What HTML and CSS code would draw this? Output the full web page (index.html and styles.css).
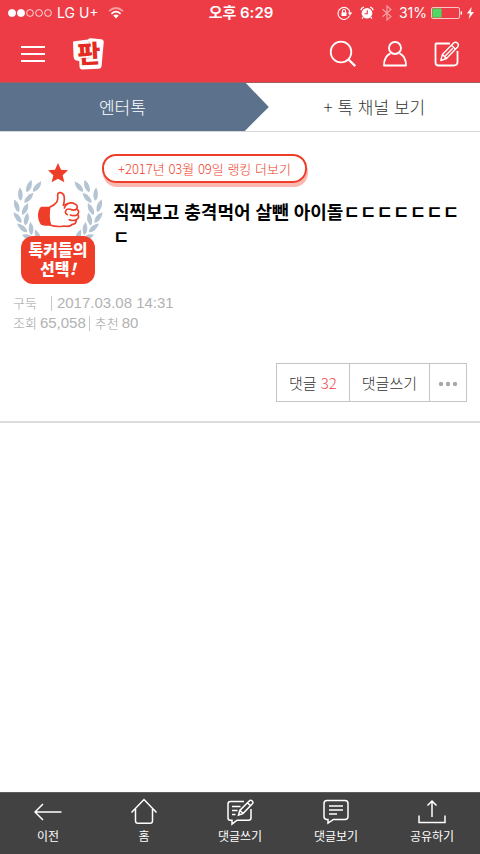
FILE: index.html
```
<!DOCTYPE html>
<html lang="ko">
	<head>
		<meta charset="UTF-8" />
		<meta name="viewport" content="width=device-width, initial-scale=1.0" />
		<title>판 - 엔터톡</title>
		<link rel="stylesheet" href="styles.css">
	</head>
	<body>
		<header class="top">
			<div class="status">
				<div class="status-left">
					<svg class="signal" width="44" height="10" viewBox="0 0 44 10" fill="none" stroke="#fff" stroke-width="0.8">
						<circle cx="4" cy="5" r="3.6" fill="#fff" />
						<circle cx="13" cy="5" r="3.6" fill="#fff" />
						<circle cx="22" cy="5" r="3.4" />
						<circle cx="31" cy="5" r="3.4" />
						<circle cx="40" cy="5" r="3.4" />
					</svg>
					<span>LG U+</span>
					<svg class="wifi" width="16" height="12" viewBox="0 0 16 12" fill="none" stroke="#fff" stroke-width="1.7">
						<path d="M1 4.2Q8-2.2 15 4.2" opacity="0.5" />
						<path d="M3.4 6.8Q8 2.6 12.6 6.8" />
						<path d="M5.2 8.6Q8 6.2 10.8 8.6L8 11.6Z" fill="#fff" stroke="none" />
					</svg>
				</div>
				<strong class="clock">오후 6:29</strong>
				<div class="status-right">
					<svg width="16" height="14" viewBox="0 0 16 14" fill="none" stroke="#fff" stroke-width="1.1">
						<path d="M12.6 9.6A6 6 0 1 1 13 7" />
						<path d="M10.8 6.6h4.6L13.1 9.6Z" fill="#fff" stroke="none" />
						<path d="M4.5 6.3h5v3.7h-5z" fill="#fff" stroke="none" />
						<path d="M5.5 6.5V5a1.5 1.5 0 0 1 3 0v1.5" />
					</svg>
					<svg class="alarm" width="14" height="14" viewBox="0 0 14 14">
						<circle cx="7" cy="7.3" r="5.3" fill="#fff" />
						<path d="M1 4.2Q1.3 1.6 4 1.2M13 4.2Q12.7 1.6 10 1.2M3.2 11.2l-1.2 1.5M10.8 11.2l1.2 1.5" fill="none" stroke="#fff" stroke-width="1.3" />
						<path d="M7.3 4.2v3.5H4.6" fill="none" stroke="#ee3c46" stroke-width="1.1" />
					</svg>
					<svg class="bluetooth" width="12" height="16" viewBox="0 0 12 16" fill="none" stroke="#fff" stroke-width="1.2">
						<path d="M1.5 4.2l8.5 7.3-4 3.5V1l4 3.5-8.5 7.3" />
					</svg>
					<span>31%</span>
					<svg width="32" height="12" viewBox="0 0 32 12">
						<rect x="0.5" y="0.5" width="28" height="11" rx="1.5" fill="none" stroke="#fff" stroke-opacity="0.7" />
						<rect x="1.5" y="1.5" width="9" height="9" fill="#4cd964" />
						<path d="M29.6 4q1.6 0 1.6 2t-1.6 2z" fill="#fff" />
					</svg>
					<svg class="bolt" width="7" height="12" viewBox="0 0 7 12"><path d="M4.6 0L0 6.6h2.8L1.7 12 7 5H4Z" fill="#fff" /></svg>
				</div>
			</div>
			<nav class="bar">
				<button class="icon-btn" type="button" aria-label="메뉴">
					<svg width="26" height="18" viewBox="0 0 26 18" stroke="#fff" stroke-width="1.8"><path d="M1 2h24M1 9h24M1 16h24" /></svg>
				</button>
				<a class="logo" href="#" aria-label="판">
					<svg width="34" height="34" viewBox="0 0 34 34">
						<path d="M2 4.5L17 2.6Q18 1 20 1.2L30 2.2Q33 2.6 32.7 5.5L31.6 17.5 30.6 29Q30.4 31.6 28 31.7L11 32.5Q8.6 32.4 8.5 30L8.2 24 4.5 23.2Q3 23 2.6 20Z" fill="#fff" />
						<path d="M18 4L19 19M9 22l10-1" stroke="#f3b5b3" stroke-width="0.8" fill="none" />
						<text class="logo-text" x="18" y="26" text-anchor="middle" transform="rotate(-3 17 17)">판</text>
					</svg>
				</a>
				<span class="spacer"></span>
				<button class="icon-btn" type="button" aria-label="검색">
					<svg width="28" height="28" viewBox="0 0 28 28" fill="none" stroke="#fff" stroke-width="1.8"><circle cx="12" cy="12" r="10.3" /><path d="M19.3 19.3l7 6.8" stroke-width="2.2" /></svg>
				</button>
				<button class="icon-btn" type="button" aria-label="내 정보">
					<svg width="28" height="28" viewBox="0 0 28 28" fill="none" stroke="#fff" stroke-width="1.8" stroke-linejoin="round"><circle cx="14" cy="8" r="6" /><path d="M9.5 13.3C5.5 15 3 18.5 3 25.5H25C25 18.5 22.5 15 18.5 13.3" /></svg>
				</button>
				<button class="icon-btn" type="button" aria-label="글쓰기">
					<svg width="28" height="28" viewBox="0 0 28 28" fill="none" stroke="#fff" stroke-width="1.8" stroke-linejoin="round">
						<path d="M17 3.5H3.2Q2.5 3.5 2.5 4.2V22.5Q2.5 25.5 5.5 25.5H20.5Q24.5 25.5 24.5 22V11" />
						<path d="M7.8 20.5l1.6-6.1L20.6 3Q22.5 1.3 24.4 3.1 26.3 5 24.6 7L13.5 18.5ZM18.5 5.2l4 4M9.4 14.4l4.1 4.1M12 16.3l7.8-8" stroke-width="1.4" />
					</svg>
				</button>
			</nav>
		</header>

		<nav class="tabs">
			<a class="tab current" href="#">엔터톡</a>
			<a class="tab" href="#">+ 톡 채널 보기</a>
		</nav>

		<main class="post">
			<div class="post-head">
				<div class="badge">
					<svg viewBox="0 0 270 237" width="90" height="79">
						<defs>
							<path id="leaf" d="M0-21Q9-8 7 4T0 19Q-7 14-7 2T0-21Z" />
							<g id="laurel" fill="#b4c4d3">
								<use href="#leaf" transform="translate(48 73) rotate(20)" />
								<use href="#leaf" transform="translate(72 74) rotate(38)" />
								<use href="#leaf" transform="translate(22 97) rotate(-4)" />
								<use href="#leaf" transform="translate(47 108) rotate(42)" />
								<use href="#leaf" transform="translate(11 132) rotate(-20)" />
								<use href="#leaf" transform="translate(36 142) rotate(26)" />
								<use href="#leaf" transform="translate(14 167) rotate(-38)" />
								<use href="#leaf" transform="translate(40 172) rotate(10)" />
								<use href="#leaf" transform="translate(28 198) rotate(-50)" />
								<use href="#leaf" transform="translate(54 200) rotate(-5)" />
								<use href="#leaf" transform="translate(46 226) rotate(-68)" />
								<use href="#leaf" transform="translate(74 222) rotate(-22)" />
							</g>
						</defs>
						<use href="#laurel" />
						<use href="#laurel" transform="matrix(-1 0 0 1 270 0)" />
						<path d="M135 3l9 20 21 2-16 15 5 21-19-11-19 11 5-21-16-15 21-2Z" fill="#ee3e2a" />
						<path d="M112 134H84Q75 143 75 160T84 188Q98 193 116 191Z" fill="#ee3e2a" />
						<g fill="#fff" stroke="#ee3e2a" stroke-width="5" stroke-linejoin="round" stroke-linecap="round">
							<path d="M110 136Q124 130 131 121 136 113 134 100 134 91 142 92 155 94 154 112 154 120 151 130L164 125Q175 120 186 126 196 131 191 141 201 147 194 157 201 167 190 173 190 186 178 187 170 196 153 192 131 196 113 190 108 180 108 163T110 136Z" />
							<path d="M191 141Q183 147 172 142 163 139 159 145M194 157Q185 164 172 159M190 173Q180 178 169 173M164 125Q157 129 154 138M159 145Q154 153 163 158" fill="none" />
						</g>
					</svg>
					<strong class="badge-label">톡커들의<br>선택<i>!</i></strong>
				</div>
				<div class="headline">
					<a class="ranking" href="#">+2017년 03월 09일 랭킹 더보기</a>
					<h1>직찍보고 충격먹어 살뺀 아이돌ㄷㄷㄷㄷㄷㄷㄷㄷ</h1>
				</div>
			</div>
			<div class="meta">
				<div class="meta-row">
					<span class="ko author">구둑</span>
					<span class="cut">2017.03.08 14:31</span>
				</div>
				<div class="meta-row">
					<span class="ko">조회</span>
					<span>65,058</span>
					<span class="ko cut">추천</span>
					<span>80</span>
				</div>
			</div>
			<div class="actions">
				<button type="button">댓글 <em>32</em></button>
				<button type="button">댓글쓰기</button>
				<button class="more" type="button" aria-label="더보기">
					<svg width="20" height="6" viewBox="0 0 20 6" fill="#a9a9a9"><circle cx="3" cy="3" r="2.2" /><circle cx="10" cy="3" r="2.2" /><circle cx="17" cy="3" r="2.2" /></svg>
				</button>
			</div>
		</main>

		<nav class="bottom">
			<a href="#">
				<svg width="28" height="28" viewBox="0 0 28 28"><path d="M27.5 14H1M9 6L1 14l8 8" /></svg>
				이전
			</a>
			<a href="#">
				<svg width="28" height="28" viewBox="0 0 28 28"><path d="M1.5 14.5L14 1.5l12.5 13M5.5 11v12q0 2.3 2.3 2.3h12.4q2.3 0 2.3-2.3V11" /></svg>
				홈
			</a>
			<a href="#">
				<svg width="28" height="28" viewBox="0 0 28 28">
					<path d="M18 3.5H4.5Q2 3.5 2 6v14q0 2.2 2.2 2.2H6v4l5-4h11.5q2.5 0 2.5-2.5V11" />
					<path d="M12.5 17l1.3-4.5L23.5 2.8q1.2-1.2 2.7.2t.2 2.7L17 15.6ZM21.5 4.8l3 3M6 8.5h8.5M6 12.5h5.5M6 16.5h3.5M14 12.5l3 3" />
				</svg>
				댓글쓰기
			</a>
			<a href="#">
				<svg width="28" height="28" viewBox="0 0 28 28"><path d="M5 2.5h18q3 0 3 3v13q0 3-3 3H11.5l-5.5 3.7v-3.7H5q-3 0-3-3v-13q0-3 3-3ZM7 8h14M7 12h14M7 16h8" /></svg>
				댓글보기
			</a>
			<a href="#">
				<svg width="28" height="28" viewBox="0 0 28 28"><path d="M14 19V3M9.5 7.5L14 3l4.5 4.5M1 17.5v7h26v-7" /></svg>
				공유하기
			</a>
		</nav>
	</body>
</html>
```
FILE: styles.css
```
* {
	box-sizing: border-box;
}
body {
	display: flex;
	flex-direction: column;
	min-height: 100vh;
	margin: 0;
	background: #fff;
	color: #333;
	font-family: 'Noto Sans CJK KR', sans-serif;
}
a {
	color: inherit;
	text-decoration: none;
}
button {
	border: 0;
	padding: 0;
	background: none;
	color: inherit;
	font: inherit;
}
svg {
	display: block;
	flex: none;
}

/* status bar and header */
.top {
	background: #ee3c46;
	color: #fff;
	border-bottom: 1px solid #a0605f;
}
.status {
	display: grid;
	grid-template-columns: 1fr auto 1fr;
	align-items: center;
	height: 26px;
	padding: 0 6px 0 8px;
	font-family: Inter, 'Noto Sans CJK KR', sans-serif;
	font-size: 14px;
	line-height: 26px;
}
.status-left,
.status-right {
	display: flex;
	align-items: center;
	gap: 5px;
}
.status-left .wifi {
	margin-left: 4px;
}
.status-right {
	justify-content: flex-end;
	gap: 4px;
}
.alarm {
	margin: 0 3px;
}
.bluetooth {
	opacity: 0.5;
	margin-right: 2px;
}
.clock {
	font-size: 15px;
	font-weight: 600;
}
.bar {
	display: flex;
	align-items: center;
	gap: 25px;
	height: 56px;
	padding: 0 19px 0 20px;
}
.bar .icon-btn + .icon-btn {
	margin-left: -1px;
}
.logo svg {
	overflow: visible;
}
.logo-text {
	fill: #e32b24;
	font-size: 25px;
	font-weight: 900;
}
.spacer {
	flex: 1;
}

/* channel tabs */
.tabs {
	display: flex;
	height: 49px;
	border-bottom: 1px solid #d5d8dc;
	font-size: 17px;
	font-weight: 300;
	line-height: 48px;
	text-align: center;
}
.tab {
	flex: 1;
}
.tab.current {
	flex: 0 0 56%;
	padding: 0 24px 0 0;
	background: #5c728c;
	color: #fff;
	clip-path: polygon(0 0, calc(100% - 23px) 0, 100% 50%, calc(100% - 24px) 100%, 0 100%);
}

/* post */
.post {
	padding: 22px 13px 19px;
	border-bottom: 2px solid #dcdcdc;
}
.post-head {
	display: flex;
	gap: 10px;
}
.badge {
	display: flex;
	flex: none;
	flex-direction: column;
	align-items: center;
	width: 90px;
	padding-top: 8px;
}
.badge-label {
	width: 74px;
	margin-top: -5px;
	padding: 4px 0 6px;
	border-radius: 12px;
	background: #ee3e2a;
	color: #fff;
	font-size: 16px;
	font-weight: 900;
	line-height: 19px;
	text-align: center;
}
.headline {
	flex: 1;
}
.ranking {
	display: inline-block;
	margin-left: -11px;
	padding: 0 14px;
	border: 2px solid #ee3e2a;
	border-radius: 14px;
	box-shadow: 1px 4px 0 #fbb8b1;
	color: #ee3e2a;
	font-size: 13px;
	font-weight: 300;
	line-height: 25px;
}
h1 {
	margin: 16px 0 0;
	color: #000;
	font-size: 18px;
	font-weight: 700;
	line-height: 25px;
	word-break: break-all;
}
.meta {
	margin-top: 9px;
	color: #b2b2b2;
	font-family: 'Liberation Sans', 'Noto Sans CJK KR', sans-serif;
	font-size: 15px;
	line-height: 20px;
}
.meta-row {
	display: flex;
	align-items: center;
	gap: 3px;
}
.ko {
	color: #a0a0a0;
	font-family: 'Noto Sans CJK KR', sans-serif;
	font-size: 13px;
	font-weight: 300;
}
.author {
	margin-right: 11px;
}
.cut {
	display: flex;
	align-items: center;
	gap: 5px;
}
.cut::before {
	content: '';
	width: 1px;
	height: 15px;
	background: #c8c8c8;
}
.actions {
	display: flex;
	justify-content: flex-end;
	margin-top: 30px;
}
.actions button {
	height: 39px;
	padding: 0 12px;
	border: 1px solid #c4c4c4;
	font-size: 15px;
	font-weight: 300;
}
.actions button + button {
	margin-left: -1px;
}
.actions .more {
	padding: 3px 8px 0;
}
.actions em {
	color: #ee3c46;
	font-style: normal;
}

/* bottom toolbar */
.bottom {
	position: sticky;
	bottom: 0;
	display: flex;
	margin-top: auto;
	padding: 5px 0 9px;
	border-top: 1px solid #5c5f5e;
	background: #424242;
	color: #fff;
	font-size: 12px;
	line-height: 19px;
}
.bottom a {
	display: flex;
	flex: 1;
	flex-direction: column;
	align-items: center;
}
.bottom svg {
	fill: none;
	stroke: #fff;
	stroke-width: 1.5;
}
```
